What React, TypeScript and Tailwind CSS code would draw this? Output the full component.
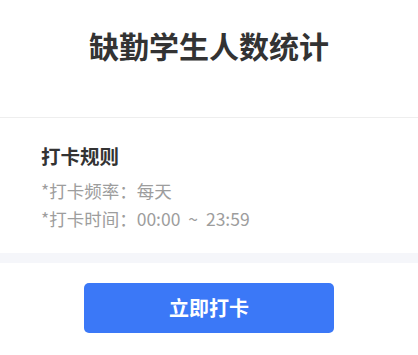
export default function App() {
  return (
    <div
      className="w-[418px] h-[355px] bg-white overflow-hidden"
      style={{ fontFamily: '"Noto Sans CJK SC", "Noto Sans", sans-serif' }}
    >
      <div className="h-[118px] border-b border-[#eeeeee] pt-[30px] flex justify-center">
        <h1 className="text-[30px] leading-[30px] font-bold text-[#333333]">缺勤学生人数统计</h1>
      </div>
      <div className="pl-[41px] pt-[25px] pb-[20px]">
        <div className="text-[19.5px] leading-[26px] font-bold text-[#333333]">打卡规则</div>
        <div className="mt-[8px] text-[17.5px] leading-[28px] text-[#9d9d9d]">
          <div>*打卡频率：每天</div>
          <div className="[word-spacing:4px]">*打卡时间：00:00 ~ 23:59</div>
        </div>
      </div>
      <div className="h-[10px] bg-[#f5f6fa]" />
      <div className="flex justify-center pt-[20px]">
        <button className="w-[250px] h-[50px] rounded-[5px] bg-[#3b78f7] text-white text-[20px] font-bold">
          立即打卡
        </button>
      </div>
    </div>
  );
}
